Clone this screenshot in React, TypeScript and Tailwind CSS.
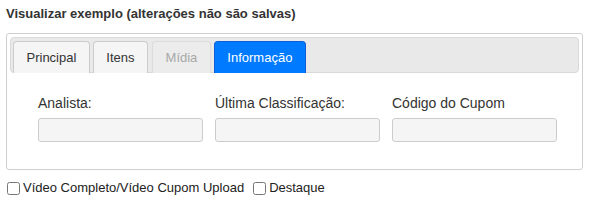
export default function App() {
  const tabs = [
    { label: "Principal", state: "normal" },
    { label: "Itens", state: "normal" },
    { label: "Mídia", state: "disabled" },
    { label: "Informação", state: "active" },
  ];

  const fields = ["Analista:", "Última Classificação:", "Código do Cupom"];

  return (
    <div className="px-[6px] pt-[6px] text-[#333] font-['Liberation_Sans',Arial,sans-serif]">
      {/* titulo */}
      <div className="text-[13px] leading-[16px] font-bold text-[#333]">
        Visualizar exemplo (alterações não são salvas)
      </div>

      {/* caixa com abas */}
      <div className="mt-[11px] w-[577px] border border-[#cfcfcf] rounded-[3px] p-[3px] pb-[27px]">
        <div className="flex gap-[3px] h-[36px] bg-[#e9e9e9] border border-[#d9d9d9] rounded-[4px] pl-[2px] pt-[3px]">
          {tabs.map((t) => (
            <div
              key={t.label}
              className={
                t.state === "active"
                  ? "h-[32px] px-[12.5px] flex items-center text-[13px] rounded-t-[4px] border border-b-0 border-[#0a5fd9] bg-[#007bff] text-white"
                  : t.state === "disabled"
                  ? "h-[32px] px-[12.5px] ml-[1px] flex items-center text-[13px] rounded-t-[4px] border border-b-0 border-[#dcdcdc] bg-[#ececec] text-[#a8a8a8]"
                  : "h-[32px] px-[12.5px] flex items-center text-[13px] rounded-t-[4px] border border-b-0 border-[#cccccc] bg-[#f5f5f5] text-[#333]"
              }
            >
              {t.label}
            </div>
          ))}
        </div>

        <div className="flex gap-[12px] pl-[28px] pt-[20px]">
          {fields.map((f) => (
            <div key={f} className="w-[165px]">
              <div className="text-[14px] leading-[20px] text-[#333]">{f}</div>
              <div className="mt-[5px] h-[24px] bg-[#f5f5f5] border border-[#cccccc] rounded-[3px]" />
            </div>
          ))}
        </div>
      </div>

      {/* checkboxes */}
      <div className="flex items-center mt-[10px] text-[13px] leading-[16px] text-[#222]">
        <label className="flex items-center">
          <input type="checkbox" className="w-[13px] h-[13px] m-0 mr-[3px] ml-[1px]" />
          Vídeo Completo/Vídeo Cupom Upload
        </label>
        <label className="flex items-center ml-[9px]">
          <input type="checkbox" className="w-[13px] h-[13px] m-0 mr-[3px]" />
          Destaque
        </label>
      </div>
    </div>
  );
}
